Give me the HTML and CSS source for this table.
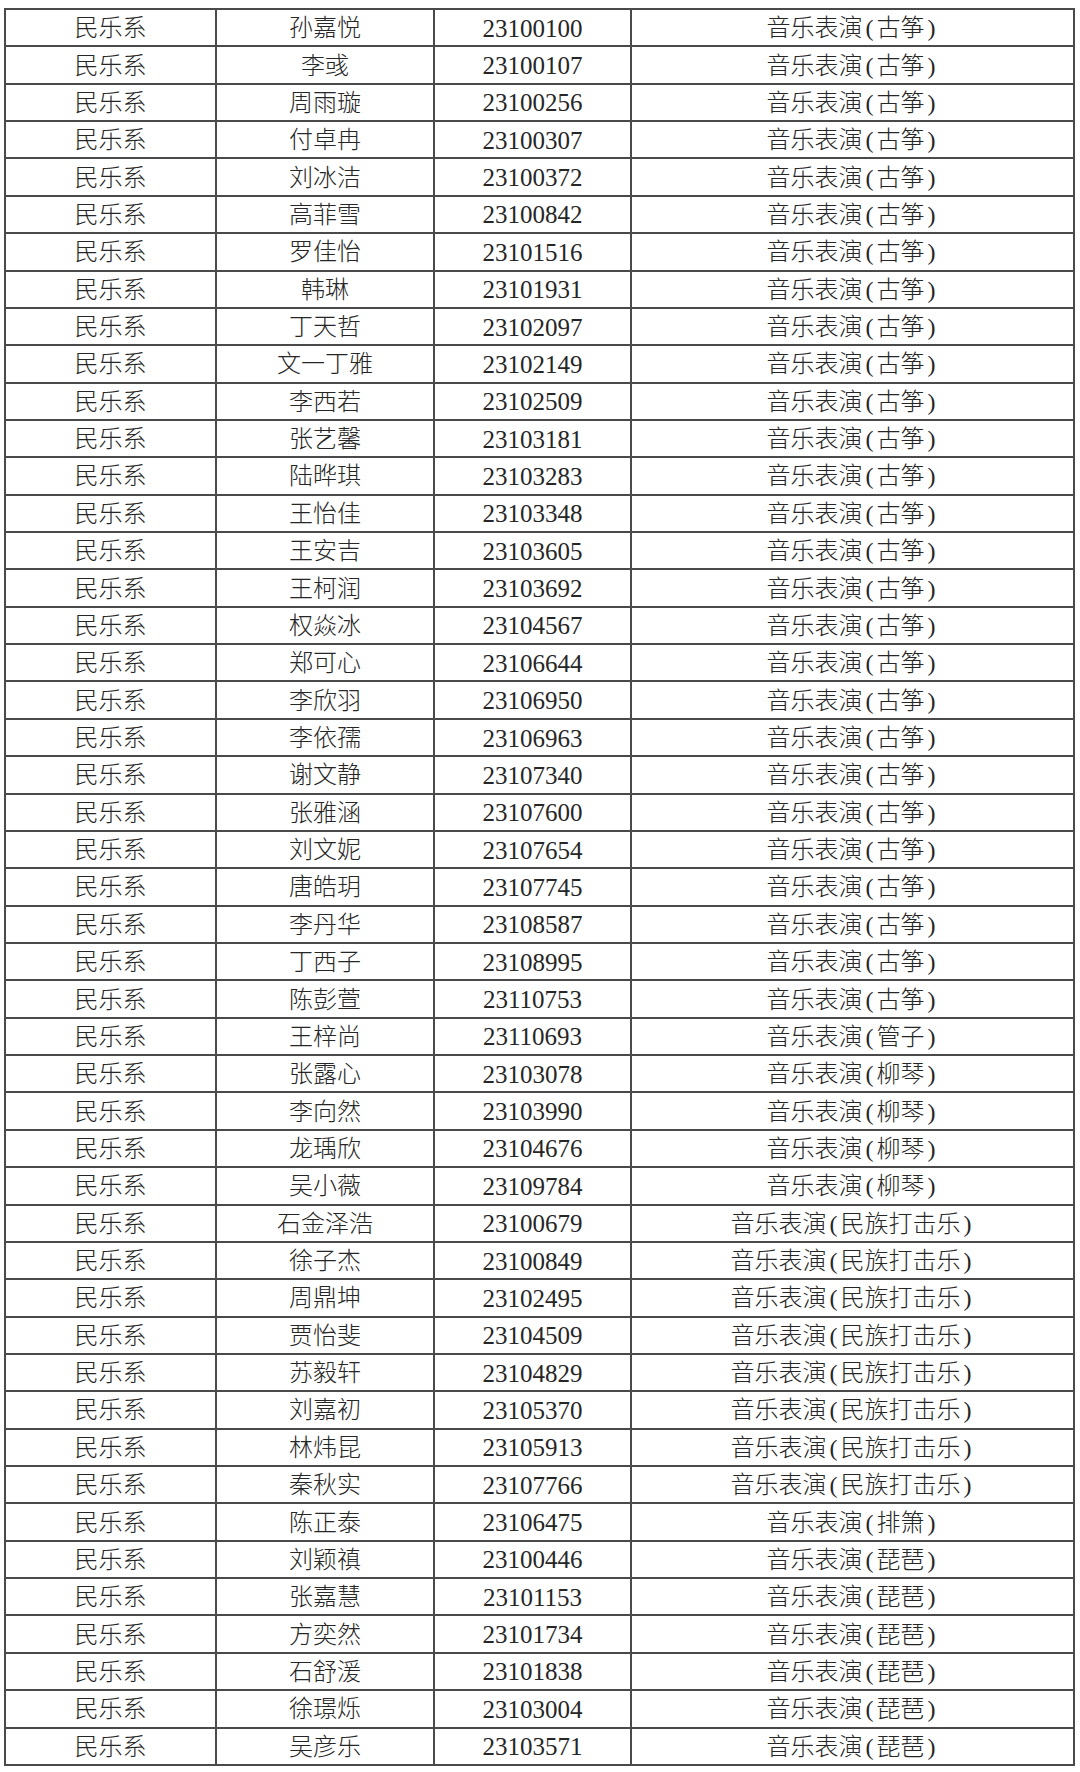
FILE: index.html
```html
<!DOCTYPE html>
<html lang="zh-CN">
<head>
<meta charset="utf-8">
<title>民乐系名单</title>
<link rel="stylesheet" href="styles.css">
</head>
<body>
<div class="sheet">
<div class="c">民乐系</div><div class="c">孙嘉悦</div><div class="c n">23100100</div><div class="c">音乐表演<span class="p">(</span>古筝<span class="p">)</span></div>
<div class="c">民乐系</div><div class="c">李彧</div><div class="c n">23100107</div><div class="c">音乐表演<span class="p">(</span>古筝<span class="p">)</span></div>
<div class="c">民乐系</div><div class="c">周雨璇</div><div class="c n">23100256</div><div class="c">音乐表演<span class="p">(</span>古筝<span class="p">)</span></div>
<div class="c">民乐系</div><div class="c">付卓冉</div><div class="c n">23100307</div><div class="c">音乐表演<span class="p">(</span>古筝<span class="p">)</span></div>
<div class="c">民乐系</div><div class="c">刘冰洁</div><div class="c n">23100372</div><div class="c">音乐表演<span class="p">(</span>古筝<span class="p">)</span></div>
<div class="c">民乐系</div><div class="c">高菲雪</div><div class="c n">23100842</div><div class="c">音乐表演<span class="p">(</span>古筝<span class="p">)</span></div>
<div class="c">民乐系</div><div class="c">罗佳怡</div><div class="c n">23101516</div><div class="c">音乐表演<span class="p">(</span>古筝<span class="p">)</span></div>
<div class="c">民乐系</div><div class="c">韩琳</div><div class="c n">23101931</div><div class="c">音乐表演<span class="p">(</span>古筝<span class="p">)</span></div>
<div class="c">民乐系</div><div class="c">丁天哲</div><div class="c n">23102097</div><div class="c">音乐表演<span class="p">(</span>古筝<span class="p">)</span></div>
<div class="c">民乐系</div><div class="c">文一丁雅</div><div class="c n">23102149</div><div class="c">音乐表演<span class="p">(</span>古筝<span class="p">)</span></div>
<div class="c">民乐系</div><div class="c">李西若</div><div class="c n">23102509</div><div class="c">音乐表演<span class="p">(</span>古筝<span class="p">)</span></div>
<div class="c">民乐系</div><div class="c">张艺馨</div><div class="c n">23103181</div><div class="c">音乐表演<span class="p">(</span>古筝<span class="p">)</span></div>
<div class="c">民乐系</div><div class="c">陆晔琪</div><div class="c n">23103283</div><div class="c">音乐表演<span class="p">(</span>古筝<span class="p">)</span></div>
<div class="c">民乐系</div><div class="c">王怡佳</div><div class="c n">23103348</div><div class="c">音乐表演<span class="p">(</span>古筝<span class="p">)</span></div>
<div class="c">民乐系</div><div class="c">王安吉</div><div class="c n">23103605</div><div class="c">音乐表演<span class="p">(</span>古筝<span class="p">)</span></div>
<div class="c">民乐系</div><div class="c">王柯润</div><div class="c n">23103692</div><div class="c">音乐表演<span class="p">(</span>古筝<span class="p">)</span></div>
<div class="c">民乐系</div><div class="c">权焱冰</div><div class="c n">23104567</div><div class="c">音乐表演<span class="p">(</span>古筝<span class="p">)</span></div>
<div class="c">民乐系</div><div class="c">郑可心</div><div class="c n">23106644</div><div class="c">音乐表演<span class="p">(</span>古筝<span class="p">)</span></div>
<div class="c">民乐系</div><div class="c">李欣羽</div><div class="c n">23106950</div><div class="c">音乐表演<span class="p">(</span>古筝<span class="p">)</span></div>
<div class="c">民乐系</div><div class="c">李依孺</div><div class="c n">23106963</div><div class="c">音乐表演<span class="p">(</span>古筝<span class="p">)</span></div>
<div class="c">民乐系</div><div class="c">谢文静</div><div class="c n">23107340</div><div class="c">音乐表演<span class="p">(</span>古筝<span class="p">)</span></div>
<div class="c">民乐系</div><div class="c">张雅涵</div><div class="c n">23107600</div><div class="c">音乐表演<span class="p">(</span>古筝<span class="p">)</span></div>
<div class="c">民乐系</div><div class="c">刘文妮</div><div class="c n">23107654</div><div class="c">音乐表演<span class="p">(</span>古筝<span class="p">)</span></div>
<div class="c">民乐系</div><div class="c">唐皓玥</div><div class="c n">23107745</div><div class="c">音乐表演<span class="p">(</span>古筝<span class="p">)</span></div>
<div class="c">民乐系</div><div class="c">李丹华</div><div class="c n">23108587</div><div class="c">音乐表演<span class="p">(</span>古筝<span class="p">)</span></div>
<div class="c">民乐系</div><div class="c">丁西子</div><div class="c n">23108995</div><div class="c">音乐表演<span class="p">(</span>古筝<span class="p">)</span></div>
<div class="c">民乐系</div><div class="c">陈彭萱</div><div class="c n">23110753</div><div class="c">音乐表演<span class="p">(</span>古筝<span class="p">)</span></div>
<div class="c">民乐系</div><div class="c">王梓尚</div><div class="c n">23110693</div><div class="c">音乐表演<span class="p">(</span>管子<span class="p">)</span></div>
<div class="c">民乐系</div><div class="c">张露心</div><div class="c n">23103078</div><div class="c">音乐表演<span class="p">(</span>柳琴<span class="p">)</span></div>
<div class="c">民乐系</div><div class="c">李向然</div><div class="c n">23103990</div><div class="c">音乐表演<span class="p">(</span>柳琴<span class="p">)</span></div>
<div class="c">民乐系</div><div class="c">龙瑀欣</div><div class="c n">23104676</div><div class="c">音乐表演<span class="p">(</span>柳琴<span class="p">)</span></div>
<div class="c">民乐系</div><div class="c">吴小薇</div><div class="c n">23109784</div><div class="c">音乐表演<span class="p">(</span>柳琴<span class="p">)</span></div>
<div class="c">民乐系</div><div class="c">石金泽浩</div><div class="c n">23100679</div><div class="c">音乐表演<span class="p">(</span>民族打击乐<span class="p">)</span></div>
<div class="c">民乐系</div><div class="c">徐子杰</div><div class="c n">23100849</div><div class="c">音乐表演<span class="p">(</span>民族打击乐<span class="p">)</span></div>
<div class="c">民乐系</div><div class="c">周鼎坤</div><div class="c n">23102495</div><div class="c">音乐表演<span class="p">(</span>民族打击乐<span class="p">)</span></div>
<div class="c">民乐系</div><div class="c">贾怡斐</div><div class="c n">23104509</div><div class="c">音乐表演<span class="p">(</span>民族打击乐<span class="p">)</span></div>
<div class="c">民乐系</div><div class="c">苏毅轩</div><div class="c n">23104829</div><div class="c">音乐表演<span class="p">(</span>民族打击乐<span class="p">)</span></div>
<div class="c">民乐系</div><div class="c">刘嘉初</div><div class="c n">23105370</div><div class="c">音乐表演<span class="p">(</span>民族打击乐<span class="p">)</span></div>
<div class="c">民乐系</div><div class="c">林炜昆</div><div class="c n">23105913</div><div class="c">音乐表演<span class="p">(</span>民族打击乐<span class="p">)</span></div>
<div class="c">民乐系</div><div class="c">秦秋实</div><div class="c n">23107766</div><div class="c">音乐表演<span class="p">(</span>民族打击乐<span class="p">)</span></div>
<div class="c">民乐系</div><div class="c">陈正泰</div><div class="c n">23106475</div><div class="c">音乐表演<span class="p">(</span>排箫<span class="p">)</span></div>
<div class="c">民乐系</div><div class="c">刘颖禛</div><div class="c n">23100446</div><div class="c">音乐表演<span class="p">(</span>琵琶<span class="p">)</span></div>
<div class="c">民乐系</div><div class="c">张嘉慧</div><div class="c n">23101153</div><div class="c">音乐表演<span class="p">(</span>琵琶<span class="p">)</span></div>
<div class="c">民乐系</div><div class="c">方奕然</div><div class="c n">23101734</div><div class="c">音乐表演<span class="p">(</span>琵琶<span class="p">)</span></div>
<div class="c">民乐系</div><div class="c">石舒湲</div><div class="c n">23101838</div><div class="c">音乐表演<span class="p">(</span>琵琶<span class="p">)</span></div>
<div class="c">民乐系</div><div class="c">徐璟烁</div><div class="c n">23103004</div><div class="c">音乐表演<span class="p">(</span>琵琶<span class="p">)</span></div>
<div class="c">民乐系</div><div class="c">吴彦乐</div><div class="c n">23103571</div><div class="c">音乐表演<span class="p">(</span>琵琶<span class="p">)</span></div>
</div>
</body>
</html>
```

FILE: styles.css
```css
html, body {
  margin: 0;
  padding: 0;
  background: #ffffff;
}

body {
  padding: 8px 0 0 4px;
}

.sheet {
  display: grid;
  grid-template-columns: 211px 218px 197px 443px;
  grid-auto-rows: 37.36px;
  width: 1069px;
  border-top: 2px solid #4a4a4a;
  border-left: 2px solid #4a4a4a;
  font-family: "Liberation Serif", "Noto Sans CJK SC", serif;
  font-size: 24px;
  font-weight: 300;
  color: #262626;
}

.c {
  display: flex;
  align-items: center;
  justify-content: center;
  border-right: 2px solid #4a4a4a;
  border-bottom: 2px solid #4a4a4a;
  box-sizing: border-box;
  line-height: 1;
  white-space: nowrap;
  padding-top: 1px;
}

.n {
  font-size: 25px;
  font-weight: 400;
}

.p {
  display: inline-block;
  width: 14px;
  text-align: center;
  font-weight: 400;
}
```
